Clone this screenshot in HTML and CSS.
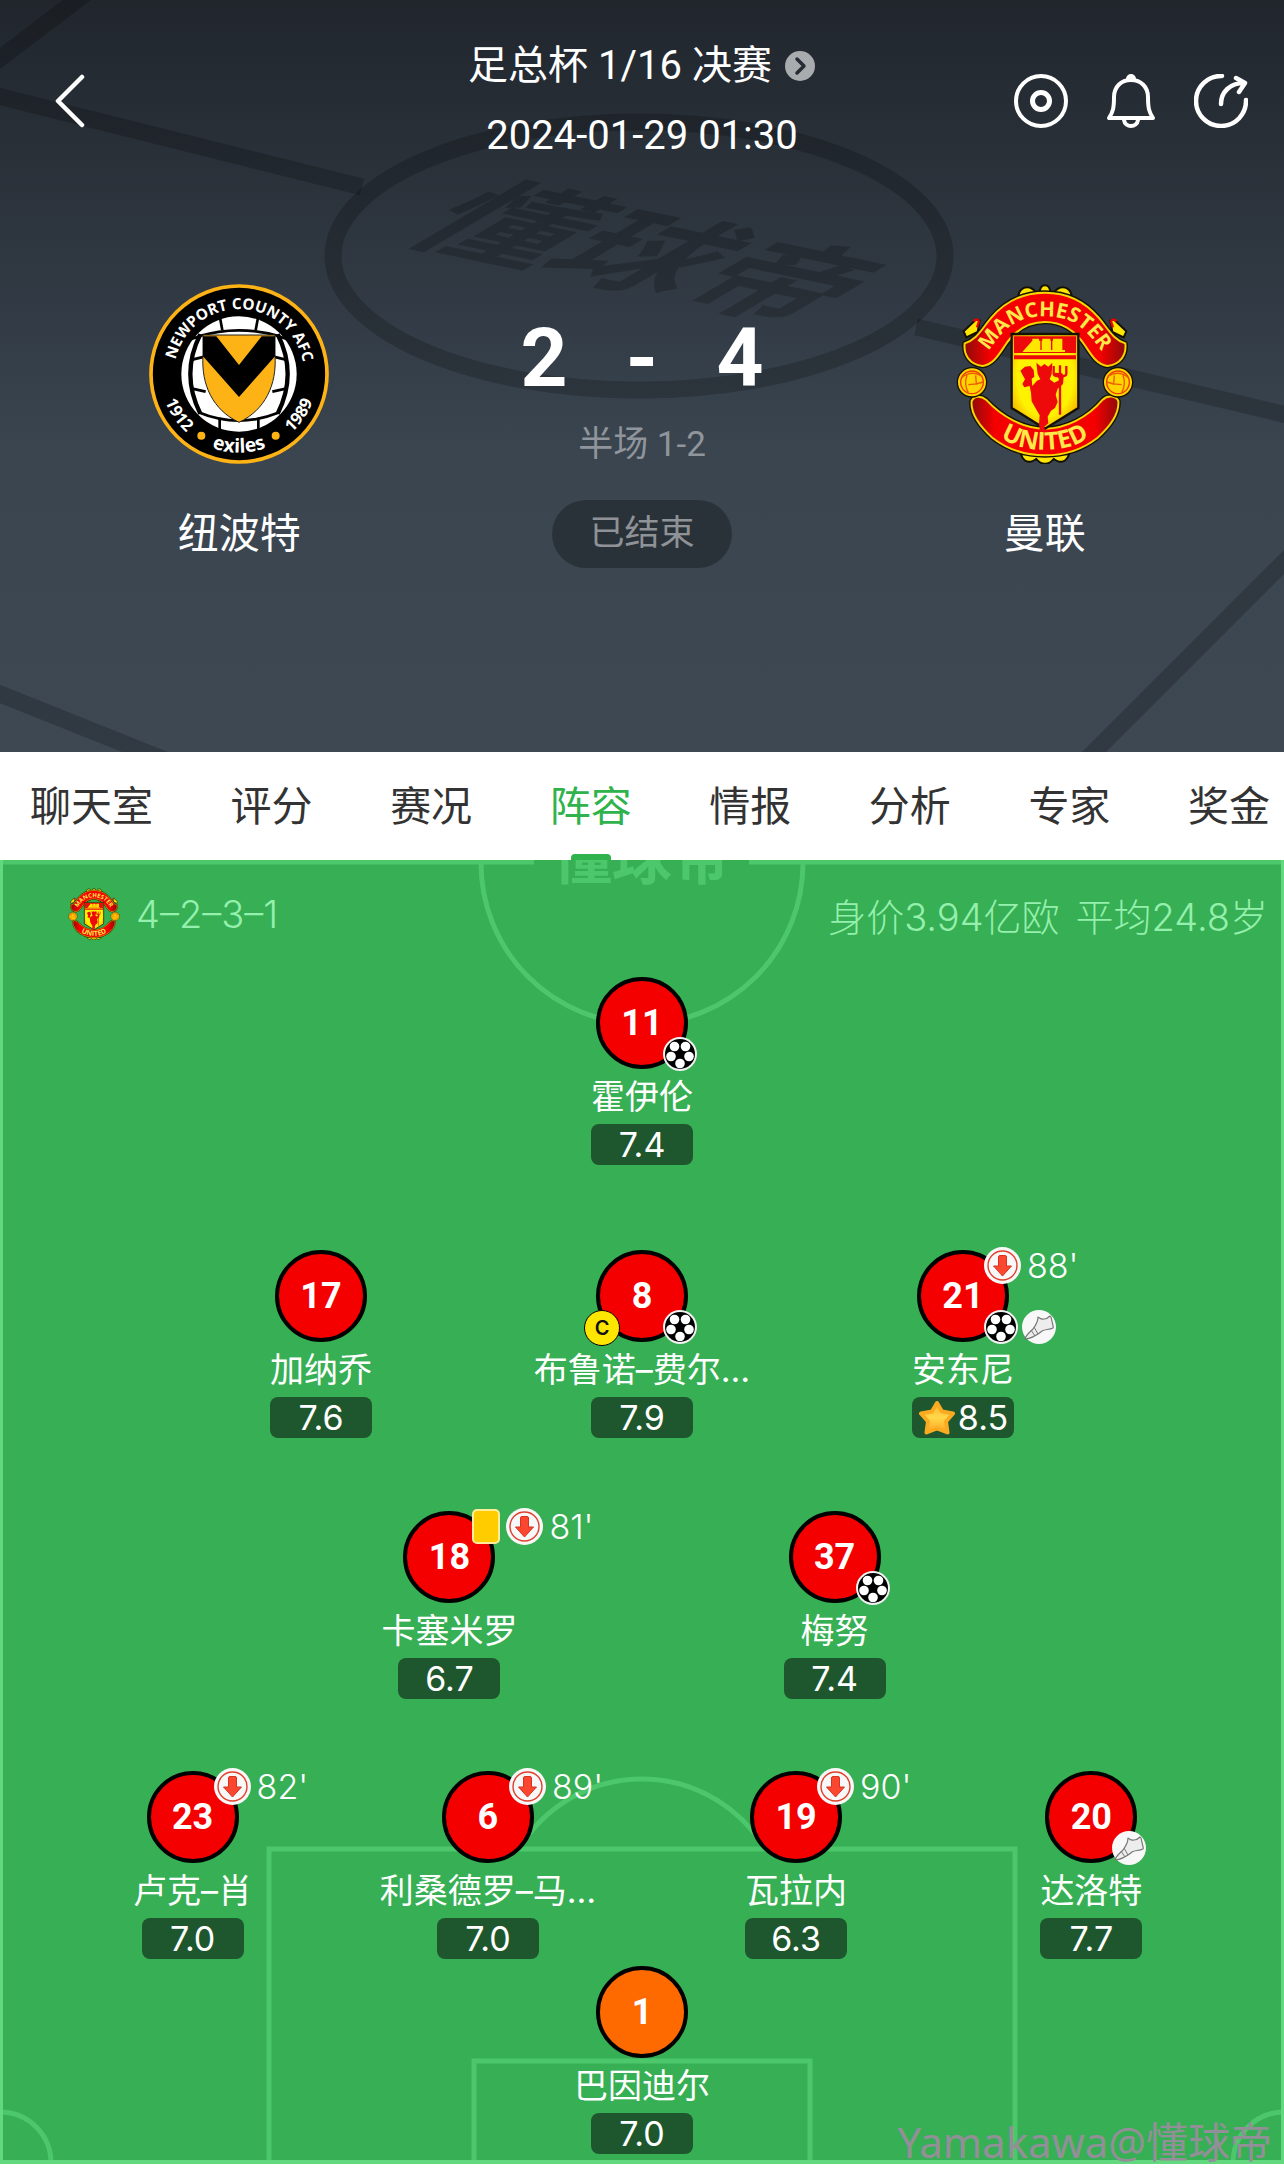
FILE: index.html
```html
<!DOCTYPE html>
<html lang="zh-CN">
<head>
    <meta charset="UTF-8">
    <meta name="viewport" content="width=device-width, initial-scale=1.0">
    <title>纽波特 2-4 曼联</title>
    <link rel="stylesheet" href="styles.css">
</head>
<body>
<!-- shared icons -->
<svg class="sprite" aria-hidden="true">
    <defs>
        <linearGradient id="starFill" x1="0" y1="0" x2="0" y2="1">
            <stop offset="0" stop-color="#ffb52e"/>
            <stop offset="0.5" stop-color="#ffd84a"/>
            <stop offset="1" stop-color="#ffa21f"/>
        </linearGradient>
        <radialGradient id="shieldFill" cx="0.5" cy="0.45" r="0.7">
            <stop offset="0.6" stop-color="#fff200"/>
            <stop offset="1" stop-color="#f08a00"/>
        </radialGradient>
        <linearGradient id="bannerFill" x1="0" y1="0" x2="1" y2="0">
            <stop offset="0" stop-color="#8e0a0a"/>
            <stop offset="0.16" stop-color="#f50000"/>
            <stop offset="0.84" stop-color="#f50000"/>
            <stop offset="1" stop-color="#8e0a0a"/>
        </linearGradient>
    </defs>
    <symbol id="ball" viewBox="0 0 34 34">
        <circle cx="17" cy="17" r="17" fill="#f2f2f2"/>
        <circle cx="17" cy="17" r="15" fill="#000"/>
        <g fill="#fff">
            <circle cx="11.500" cy="9.500" r="4.800"/>
            <circle cx="22.500" cy="9.500" r="4.800"/>
            <circle cx="8" cy="19.500" r="4.800"/>
            <circle cx="26" cy="19.500" r="4.800"/>
            <circle cx="17" cy="26.500" r="4.800"/>
        </g>
    </symbol>
    <symbol id="boot" viewBox="0 0 34 34">
        <circle cx="17" cy="17" r="17" fill="#f8f8f8"/>
        <path d="M16 7c2 1 3 3 6 2 2 0 4-1 6-3 2 1 1 3 2 5 0 3 2 5 1 7-4 2-8 1-11 3-4 3-8 7-17 8 1-4 5-7 8-10 3-4 5-7 5-12z" fill="#ededed" stroke="#777" stroke-width="1.200" stroke-linejoin="round"/>
        <path d="M9 20l4 6M12 17l4 7" fill="none" stroke="#777" stroke-width="1"/>
    </symbol>
    <symbol id="sub" viewBox="0 0 37 37">
        <circle cx="18.500" cy="18.500" r="18.500" fill="#f8f8f8"/>
        <circle cx="18.500" cy="18.500" r="14.500" fill="none" stroke="#e0402c" stroke-width="1.400"/>
        <path d="M14.500 10q0-1.500 1.500-1.500h5q1.500 0 1.500 1.500v9h5l-9 10-9-10h5z" fill="#fb4630" stroke="#d63320" stroke-width="1" stroke-linejoin="round"/>
    </symbol>
    <symbol id="star" viewBox="0 0 38 35">
        <path d="M19 3l5 8.500 11 2-7 8 1.500 11-10.500-4-10.500 4L10 21.500l-7-8 11-2z" fill="url(#starFill)" stroke="#fbab22" stroke-width="4" stroke-linejoin="round"/>
    </symbol>
    <symbol id="united" viewBox="76 44 532 540">
        <g fill="#ffe600" stroke="#151100" stroke-width="6">
            <path d="M262 82c0-18 14-28 26-28 14 0 22 8 28 18l10-6c2-12 8-18 16-18s14 6 16 18l10 6c6-10 14-18 28-18 12 0 26 10 26 28z"/>
            <path d="M270 555c4 16 16 24 28 22 8 0 14-6 18-8 6 8 16 14 26 14s20-6 26-14c4 2 10 8 18 8 12 2 24-6 28-22z"/>
            <path d="M98 186l38-36 10 4-6 34-34 16z"/>
            <path d="M586 186l-38-36-10 4 6 34 34 16z"/>
        </g>
        <path d="M128 156q10-12 16 0l-6 18M556 156q-10-12-16 0l6 18" fill="none" stroke="#e00" stroke-width="7"/>
        <path d="M101 222c38-12 50-42 80-77 45-53 104-75 161-75s116 22 161 75c30 35 42 65 80 77 4 34-14 64-54 68-30-4-46-30-66-60-30-46-68-72-121-72s-91 26-121 72c-20 30-36 56-66 60-40-4-58-34-54-68z" fill="url(#bannerFill)" stroke="#151100" stroke-width="14" stroke-linejoin="round"/>
        <path d="M101 222c38-12 50-42 80-77 45-53 104-75 161-75s116 22 161 75c30 35 42 65 80 77 4 34-14 64-54 68-30-4-46-30-66-60-30-46-68-72-121-72s-91 26-121 72c-20 30-36 56-66 60-40-4-58-34-54-68z" fill="url(#bannerFill)" stroke="#f6d500" stroke-width="6"/>
        <path d="M122 395c8-16 28-16 43-4 50 54 115 87 177 87s127-33 173-87c15-14 40-12 47 4 3 35-17 70-62 110-45 35-100 53-158 53s-113-18-158-53c-44-40-66-75-62-110z" fill="url(#bannerFill)" stroke="#151100" stroke-width="14"/>
        <path d="M122 395c8-16 28-16 43-4 50 54 115 87 177 87s127-33 173-87c15-14 40-12 47 4 3 35-17 70-62 110-45 35-100 53-158 53s-113-18-158-53c-44-40-66-75-62-110z" fill="url(#bannerFill)" stroke="#f6d500" stroke-width="6"/>
        <g fill="#ffd400" stroke-width="4">
            <circle cx="123" cy="339" r="44" stroke="#151100"/>
            <circle cx="123" cy="339" r="34" stroke="#f03c00"/>
            <path d="M92 325q30-24 62-4M108 318q-10 28 4 52M134 318l2 26-24 2M136 344l20-6" fill="none" stroke="#f05a00"/>
        </g>
        <g fill="#ffd400" stroke-width="4">
            <circle cx="561" cy="339" r="44" stroke="#151100"/>
            <circle cx="561" cy="339" r="34" stroke="#f03c00"/>
            <path d="M592 325q-30-24-62-4M576 318q10 28-4 52M550 318l-2 26 24 2M548 344l-20-6" fill="none" stroke="#f05a00"/>
        </g>
        <path d="M242 194h200v222l-100 62-100-62z" fill="url(#shieldFill)" stroke="#151100" stroke-width="7"/>
        <path d="M249 201h186v50H249zM249 258h186v12H249z" fill="#ee0a0a"/>
        <path d="M274 248l30-34v-6h20v6h10v-6h24v6h8v-6h28v34h8v6z" fill="#ffe600"/>
        <path d="M330 210v32M362 210v32" stroke="#ee0a0a" stroke-width="4"/>
        <!-- red devil with trident -->
        <path d="M268 304l14-12 16-2 10 12 2 20-8 6 2 22 14-16 10-4-8-16-4-34 14 12 10-8 12 8 12-12-2 34-6 16 14 10 16-8-8-12-8-2 2-8 22 2 4 10-2 22-16 14-6 18 6 22-8 18-12 8-10 18 2 20-12 10 2 14 6 18-26 6-2-10 8-6-4-30 2-26-14-24-10-18-2-26-4-20-16 4-6-10 8-14z" fill="#ee0a0a"/>
        <path d="M368 290v22q0 8 8 8h22q8 0 8-8v-22M387 288v148" fill="none" stroke="#ee0a0a" stroke-width="7"/>
        <path id="unitedTop" d="M146 276C198 224 220 141 342 141s144 83 196 135" fill="none"/>
        <path id="unitedBottom" d="M176 474C244 564 440 564 508 474" fill="none"/>
        <g class="crest-text" fill="#ffe94a">
            <text font-size="62"><textPath href="#unitedTop" startOffset="50%" text-anchor="middle">MANCHESTER</textPath></text>
            <text font-size="74"><textPath href="#unitedBottom" startOffset="50%" text-anchor="middle">UNITED</textPath></text>
        </g>
    </symbol>
</svg>

<header class="match">
    <svg class="match-bg" viewBox="0 0 1284 752" preserveAspectRatio="none" aria-hidden="true">
        <g fill="none" stroke="#000" stroke-opacity="0.2" stroke-width="17">
            <ellipse cx="639" cy="256" rx="306" ry="134"/>
            <path d="M-10 94L362 187M916 327L1300 418M90-10L-10 66M-10 690L180 766M1080 766L1300 546"/>
        </g>
        <text class="match-bg-text" transform="matrix(1.360 0.285 -1.250 0.740 398 238)">懂球帝</text>
    </svg>

    <div class="topbar">
        <button class="icon-btn" aria-label="返回">
            <svg width="54" height="54" viewBox="0 0 54 54"><path d="M46 3L22 27l24 24" fill="none" stroke="#fff" stroke-width="4.500" stroke-linecap="round" stroke-linejoin="round"/></svg>
        </button>
        <div class="match-info">
            <a href="#" class="league">足总杯 1/16 决赛
                <svg width="32" height="32" viewBox="0 0 32 32"><circle cx="16" cy="16" r="15" fill="#a9acaf"/><path d="M13 9l7 7-7 7" fill="none" stroke="#262c33" stroke-width="3.500" stroke-linecap="round" stroke-linejoin="round"/></svg>
            </a>
            <time class="kickoff" datetime="2024-01-29T01:30">2024-01-29 01:30</time>
        </div>
        <div class="actions">
            <button class="icon-btn" aria-label="直播">
                <svg width="54" height="54" viewBox="0 0 54 54" fill="none" stroke="#fff"><circle cx="27" cy="27" r="25" stroke-width="4"/><circle cx="27" cy="27" r="8.500" stroke-width="5"/></svg>
            </button>
            <button class="icon-btn" aria-label="提醒">
                <svg width="54" height="54" viewBox="0 0 54 54" fill="none" stroke="#fff" stroke-width="4" stroke-linejoin="round" stroke-linecap="round"><path d="M27 6c-10 0-17 7-17 17 0 11-1 15-5 21h44c-4-6-5-10-5-21 0-10-7-17-17-17z"/><path d="M24 5a3 3 0 0 1 6 0M20 46c1 8 13 8 14 0"/></svg>
            </button>
            <button class="icon-btn" aria-label="分享">
                <svg width="54" height="54" viewBox="0 0 54 54" fill="none" stroke="#fff" stroke-width="4.500" stroke-linecap="round" stroke-linejoin="round"><path d="M28 2A25 25 0 1 0 52 26"/><path d="M27 30C27 18 36 9 50 9M42 4l9 5-6 9"/></svg>
            </button>
        </div>
    </div>

    <div class="scoreboard">
        <div class="team">
            <svg class="crest" viewBox="60 45 540 540" role="img" aria-label="Newport County AFC">
                <circle cx="330" cy="315" r="264" fill="#000" stroke="#fdb315" stroke-width="11"/>
                <circle cx="330" cy="315" r="173" fill="#fff"/>
                <g fill="none" stroke="#000" stroke-width="8">
                    <path d="M214 196q-60 119 0 238M446 196q60 119 0 238" stroke-width="13"/>
                    <path d="M208 202Q330 166 452 202M208 430q122 50 244 0"/>
                    <path d="M272 140l8 44M388 140l-8 44M190 272l40-10M470 272l-40-10M186 358l44 10M474 358l-44 10M272 446v44M388 446v44M176 214l40-14M484 214l-40-14"/>
                </g>
                <path d="M222 198h216v60c6 90-30 165-108 202-78-37-114-112-108-202z" fill="#fdb315" stroke="#222" stroke-width="3"/>
                <path d="M222 202h40l68 86 68-86h40v60L330 384 222 262z" fill="#000"/>
                <circle cx="217" cy="500" r="12" fill="#fdb315"/>
                <circle cx="440" cy="500" r="12" fill="#fdb315"/>
                <path id="npTop" d="M135 315a195 195 0 0 1 390 0v20" fill="none"/>
                <path id="npBottom" d="M94 315a236 236 0 0 0 472 0" fill="none"/>
                <g class="crest-text" fill="#fff">
                    <text font-size="46"><textPath href="#npTop" startOffset="49%" text-anchor="middle">NEWPORT COUNTY AFC</textPath></text>
                    <text font-size="50"><textPath href="#npBottom" startOffset="19%" text-anchor="middle">1912</textPath></text>
                    <text font-size="58"><textPath href="#npBottom" startOffset="50%" text-anchor="middle">exiles</textPath></text>
                    <text font-size="50"><textPath href="#npBottom" startOffset="81%" text-anchor="middle">1989</textPath></text>
                </g>
            </svg>
            <span class="team-name">纽波特</span>
        </div>
        <div class="result">
            <div class="score"><span>2</span><span>-</span><span>4</span></div>
            <div class="half">半场 1-2</div>
            <div class="status">已结束</div>
        </div>
        <div class="team">
            <svg class="crest" role="img" aria-label="Manchester United"><use href="#united"/></svg>
            <span class="team-name">曼联</span>
        </div>
    </div>
</header>

<nav class="tabs">
    <a href="#">聊天室</a>
    <a href="#">评分</a>
    <a href="#">赛况</a>
    <a href="#" class="active">阵容</a>
    <a href="#">情报</a>
    <a href="#">分析</a>
    <a href="#">专家</a>
    <a href="#">奖金</a>
</nav>

<main class="pitch">
    <svg class="pitch-lines" viewBox="0 0 1284 1304" preserveAspectRatio="none" aria-hidden="true">
        <g fill="none" stroke="#4cc76b" stroke-width="5">
            <circle cx="642" cy="3" r="161"/>
            <path d="M519 989a143 143 0 0 1 246 0M269 1304V989h746v315M474 1304v-103h336v103"/>
            <path d="M0 1252a51 51 0 0 1 51 52M1284 1252a51 51 0 0 0-51 52"/>
            <path d="M0 2h534M749 2h535"/>
        </g>
        <path d="M1 0v1302h1282V0" fill="none" stroke="#62d97e" stroke-width="4"/>
        <text class="pitch-text" x="642" y="19" text-anchor="middle">懂球帝</text>
    </svg>

    <div class="lineup-info">
        <svg class="mini-crest" aria-hidden="true"><use href="#united"/></svg>
        <span>4–2–3–1</span>
        <span class="value">身价3.94亿欧</span>
        <span>平均24.8岁</span>
    </div>

    <div class="row forward">
        <div class="player">
            <div class="shirt">11
                <div class="badges-bottom"><svg class="ball"><use href="#ball"/></svg></div>
            </div>
            <div class="name">霍伊伦</div>
            <div class="rating">7.4</div>
        </div>
    </div>

    <div class="row attack">
        <div class="player">
            <div class="shirt">17</div>
            <div class="name">加纳乔</div>
            <div class="rating">7.6</div>
        </div>
        <div class="player">
            <div class="shirt">8
                <div class="captain">C</div>
                <div class="badges-bottom"><svg class="ball"><use href="#ball"/></svg></div>
            </div>
            <div class="name">布鲁诺–费尔…</div>
            <div class="rating">7.9</div>
        </div>
        <div class="player">
            <div class="shirt">21
                <div class="badges-top"><svg class="sub"><use href="#sub"/></svg>88'</div>
                <div class="badges-bottom"><svg class="ball"><use href="#ball"/></svg><svg class="ball"><use href="#boot"/></svg></div>
            </div>
            <div class="name">安东尼</div>
            <div class="rating"><svg class="star"><use href="#star"/></svg>8.5</div>
        </div>
    </div>

    <div class="row midfield">
        <div class="player">
            <div class="shirt">18
                <div class="badges-top"><i class="yellow-card"></i><svg class="sub"><use href="#sub"/></svg>81'</div>
            </div>
            <div class="name">卡塞米罗</div>
            <div class="rating">6.7</div>
        </div>
        <div class="player">
            <div class="shirt">37
                <div class="badges-bottom"><svg class="ball"><use href="#ball"/></svg></div>
            </div>
            <div class="name">梅努</div>
            <div class="rating">7.4</div>
        </div>
    </div>

    <div class="row defence">
        <div class="player">
            <div class="shirt">23
                <div class="badges-top"><svg class="sub"><use href="#sub"/></svg>82'</div>
            </div>
            <div class="name">卢克–肖</div>
            <div class="rating">7.0</div>
        </div>
        <div class="player">
            <div class="shirt">6
                <div class="badges-top"><svg class="sub"><use href="#sub"/></svg>89'</div>
            </div>
            <div class="name">利桑德罗–马…</div>
            <div class="rating">7.0</div>
        </div>
        <div class="player">
            <div class="shirt">19
                <div class="badges-top"><svg class="sub"><use href="#sub"/></svg>90'</div>
            </div>
            <div class="name">瓦拉内</div>
            <div class="rating">6.3</div>
        </div>
        <div class="player">
            <div class="shirt">20
                <div class="badges-bottom"><svg class="ball"><use href="#boot"/></svg></div>
            </div>
            <div class="name">达洛特</div>
            <div class="rating">7.7</div>
        </div>
    </div>

    <div class="row keeper">
        <div class="player">
            <div class="shirt">1</div>
            <div class="name">巴因迪尔</div>
            <div class="rating">7.0</div>
        </div>
    </div>

    <div class="watermark">Yamakawa@懂球帝</div>
</main>
</body>
</html>
```
FILE: styles.css
```css
* {
    box-sizing: border-box;
}
body {
    margin: 0;
    background: #fff;
    font-family: Inter, "Noto Sans CJK SC", sans-serif;
}
a {
    color: inherit;
    text-decoration: none;
}
svg {
    display: block;
}
.sprite {
    position: absolute;
    width: 0;
    height: 0;
}
.crest-text {
    font-family: "Open Sans", "Noto Sans", sans-serif;
    font-weight: 700;
}

/* match header */
.match {
    position: relative;
    padding: 36px 0 184px;
    background: linear-gradient(#21262d, #2d353e 30%, #3a4550 60%, #3e4853);
    color: #fff;
    font-family: Roboto, "Noto Sans CJK SC", sans-serif;
}
.match-bg {
    position: absolute;
    top: 0;
    left: 0;
    width: 100%;
    height: 100%;
}
.match-bg-text {
    font-family: "Noto Sans CJK SC", sans-serif;
    font-size: 100px;
    font-weight: 700;
    fill: #000;
    fill-opacity: 0.2;
}
.topbar {
    position: relative;
    display: grid;
    grid-template-columns: 1fr auto 1fr;
    align-items: center;
    padding: 0 36px;
}
.icon-btn {
    width: 54px;
    height: 54px;
    padding: 0;
    border: none;
    background: none;
    cursor: pointer;
}
.match-info {
    display: flex;
    flex-direction: column;
    align-items: center;
    gap: 10px;
    font-size: 40px;
    line-height: 60px;
}
.league {
    display: flex;
    align-items: center;
    gap: 12px;
}
.actions {
    display: flex;
    justify-content: flex-end;
    gap: 36px;
}
.scoreboard {
    position: relative;
    display: grid;
    grid-template-columns: 1fr 1fr 1fr;
    padding: 118px 38px 0;
}
.team {
    display: flex;
    flex-direction: column;
    align-items: center;
    gap: 40px;
}
.crest {
    width: 180px;
    height: 180px;
}
.team-name {
    font-size: 41px;
    line-height: 60px;
}
.result {
    display: flex;
    flex-direction: column;
    align-items: center;
    padding-top: 24px;
}
.score {
    display: flex;
    font-size: 82px;
    font-weight: 700;
    line-height: 100px;
}
.score span {
    width: 98px;
    text-align: center;
}
.half {
    margin-top: 12px;
    font-size: 35px;
    line-height: 50px;
    color: #8f959b;
}
.status {
    width: 180px;
    margin-top: 30px;
    border-radius: 35px;
    background: #2a3239;
    color: #8f9296;
    font-size: 35px;
    line-height: 68px;
    text-align: center;
}

/* tabs */
.tabs {
    display: flex;
    justify-content: space-between;
    padding: 0 14px 0 30px;
    background: #fff;
    color: #333;
    font-size: 41px;
    line-height: 108px;
}
.tabs a {
    position: relative;
}
.tabs .active {
    color: #30b34c;
}
.tabs .active::after {
    content: "";
    position: absolute;
    left: 50%;
    bottom: 0;
    width: 40px;
    height: 6px;
    margin-left: -20px;
    border-radius: 4px 4px 0 0;
    background: #30b34c;
}

/* lineup */
.pitch {
    position: relative;
    margin-bottom: 16px;
    padding-bottom: 10px;
    background: #37af54;
    color: #fff;
}
.pitch-lines {
    position: absolute;
    top: 0;
    left: 0;
    width: 100%;
    height: 100%;
}
.pitch-text {
    font-family: "Noto Sans CJK SC", sans-serif;
    font-size: 60px;
    font-weight: 700;
    fill: #4cc76b;
}
.lineup-info {
    position: relative;
    display: flex;
    align-items: center;
    gap: 16px;
    height: 108px;
    padding: 0 16px 0 68px;
    color: #94f0ac;
    font-size: 38px;
    font-weight: 300;
}
.mini-crest {
    width: 52px;
    height: 52px;
}
.value {
    margin-left: auto;
}
.row {
    position: relative;
    display: flex;
    justify-content: center;
}
.player {
    width: 25%;
    display: flex;
    flex-direction: column;
    align-items: center;
    font-size: 34px;
}
.shirt {
    position: relative;
    width: 92px;
    height: 92px;
    border: 4px solid #000;
    border-radius: 50%;
    background: #f50000;
    font-family: Roboto, sans-serif;
    font-size: 36px;
    font-weight: 700;
    line-height: 84px;
    text-align: center;
}
.name {
    margin: 4px 0 3px;
    line-height: 48px;
    white-space: nowrap;
}
.rating {
    display: flex;
    align-items: center;
    justify-content: center;
    width: 102px;
    height: 41px;
    border-radius: 8px;
    background: #1e572d;
}
.forward {
    padding-top: 9px;
}
.attack {
    padding-top: 85px;
}
.midfield {
    padding-top: 73px;
}
.midfield .player {
    width: 30%;
}
.defence {
    padding-top: 72px;
}
.defence .player {
    width: 23%;
}
.defence .player:nth-child(3) {
    margin-left: 1%;
}
.keeper {
    padding-top: 7px;
}
.keeper .shirt {
    background: #ff6a00;
}
.badges-top,
.badges-bottom {
    position: absolute;
    left: 63px;
    display: flex;
    align-items: center;
    gap: 6px;
    font-family: Inter, sans-serif;
    font-size: 34px;
    font-weight: 300;
    line-height: 34px;
}
.badges-top {
    top: -7px;
}
.badges-bottom {
    bottom: -6px;
    gap: 4px;
}
.ball {
    width: 34px;
    height: 34px;
}
.sub {
    width: 37px;
    height: 37px;
}
.star {
    width: 38px;
    height: 35px;
    margin-right: 2px;
}
.yellow-card {
    width: 28px;
    height: 35px;
    margin-left: 2px;
    border: 2px solid #ffec9c;
    border-radius: 5px;
    background: #ffcc00;
}
.captain {
    position: absolute;
    left: -16px;
    bottom: -8px;
    width: 36px;
    height: 36px;
    border: 1px solid #000;
    border-radius: 50%;
    background: #ffe600;
    color: #111;
    font-family: Inter, sans-serif;
    font-size: 20px;
    font-weight: 600;
    line-height: 34px;
}
.watermark {
    position: absolute;
    right: 12px;
    bottom: -8px;
    color: #938f98;
    font-family: "Noto Sans", "Noto Sans CJK SC", sans-serif;
    font-size: 42px;
    line-height: 60px;
}
```
